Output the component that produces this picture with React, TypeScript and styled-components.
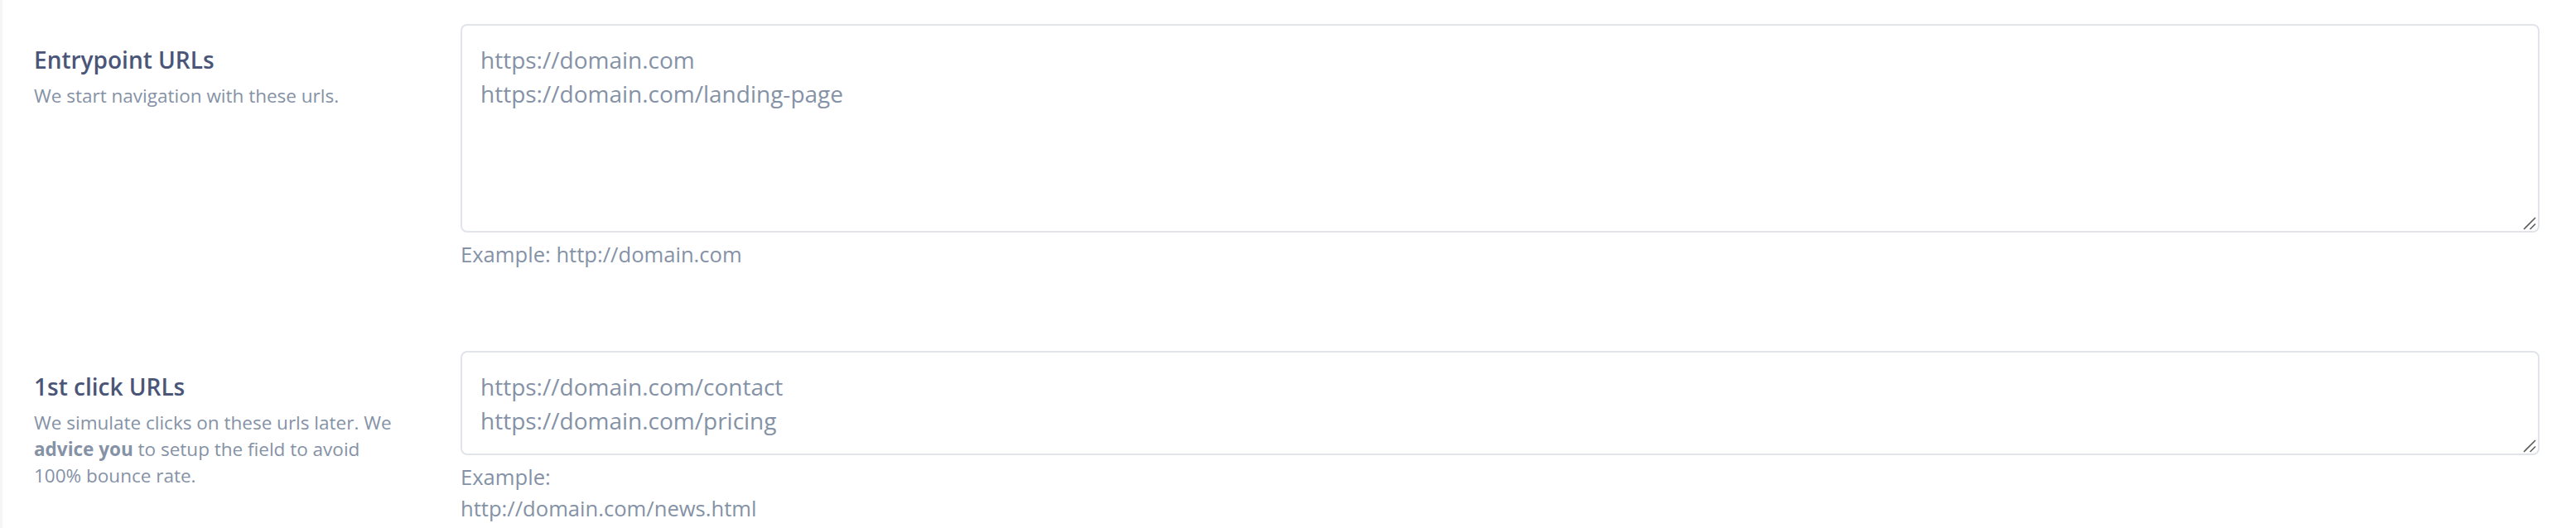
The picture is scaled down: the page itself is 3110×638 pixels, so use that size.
import React from "react";
import styled, { createGlobalStyle } from "styled-components";

const GlobalStyle = createGlobalStyle`
  html, body {
    margin: 0;
    padding: 0;
    background: #ffffff;
  }
  body {
    font-family: "Open Sans", "Noto Sans", Arial, sans-serif;
    -webkit-font-smoothing: antialiased;
  }
  * { box-sizing: border-box; }
`;

const Page = styled.div`
  border-left: 3px solid #f4f5f7;
  padding: 29px 44px 0 38px;
  min-height: 638px;
  display: flex;
  flex-direction: column;
  gap: 97px;
`;

const FieldRow = styled.div`
  display: grid;
  grid-template-columns: 515px 1fr;
  align-items: start;
`;

const LabelColumn = styled.div`
  padding-top: 23px;
  padding-right: 74px;
`;

const Title = styled.div`
  font-size: 28px;
  line-height: 40px;
  font-weight: 600;
  color: #4a5578;
`;

const Description = styled.div`
  margin-top: 8px;
  font-size: 22.5px;
  line-height: 32px;
  color: #8592a6;

  strong {
    font-weight: 700;
  }
`;

const InputColumn = styled.div`
  display: flex;
  flex-direction: column;
`;

const AreaWrap = styled.div`
  position: relative;
`;

const TextArea = styled.textarea<{ $height: number }>`
  display: block;
  width: 100%;
  height: ${(p) => p.$height}px;
  border: 2px solid #e1e4e9;
  border-radius: 8px;
  padding: 21px 22px 19px;
  font-family: "Open Sans", "Noto Sans", Arial, sans-serif;
  font-size: 28px;
  line-height: 41px;
  color: #8592a6;
  background: #ffffff;
  resize: none;
  outline: none;

  &::placeholder {
    color: #8592a6;
    opacity: 1;
  }
`;

const Handle = styled.svg`
  position: absolute;
  right: 4px;
  bottom: 3px;
  width: 16px;
  height: 16px;
  pointer-events: none;
`;

const Hint = styled.div`
  margin-top: 8px;
  font-size: 25.6px;
  line-height: 38px;
  color: #8592a6;
`;

const ResizeHandle = () => (
  <Handle viewBox="0 0 16 16">
    <line x1="1" y1="15" x2="15" y2="1" stroke="#5c5c5c" strokeWidth="1.6" />
    <line x1="8.5" y1="15" x2="15" y2="8.5" stroke="#5c5c5c" strokeWidth="1.6" />
  </Handle>
);

type FieldProps = {
  title: string;
  description: React.ReactNode;
  placeholder: string;
  height: number;
  hint: React.ReactNode;
};

const Field = ({ title, description, placeholder, height, hint }: FieldProps) => (
  <FieldRow>
    <LabelColumn>
      <Title>{title}</Title>
      <Description>{description}</Description>
    </LabelColumn>
    <InputColumn>
      <AreaWrap>
        <TextArea $height={height} placeholder={placeholder} />
        <ResizeHandle />
      </AreaWrap>
      <Hint>{hint}</Hint>
    </InputColumn>
  </FieldRow>
);

export default function App() {
  return (
    <>
      <GlobalStyle />
      <Page>
        <Field
          title="Entrypoint URLs"
          description="We start navigation with these urls."
          placeholder={"https://domain.com\nhttps://domain.com/landing-page"}
          height={252}
          hint="Example: http://domain.com"
        />
        <Field
          title="1st click URLs"
          description={
            <>
              We simulate clicks on these urls later. We <strong>advice you</strong> to setup the
              field to avoid 100% bounce rate.
            </>
          }
          placeholder={"https://domain.com/contact\nhttps://domain.com/pricing"}
          height={126}
          hint={
            <>
              Example:
              <br />
              http://domain.com/news.html
            </>
          }
        />
      </Page>
    </>
  );
}
